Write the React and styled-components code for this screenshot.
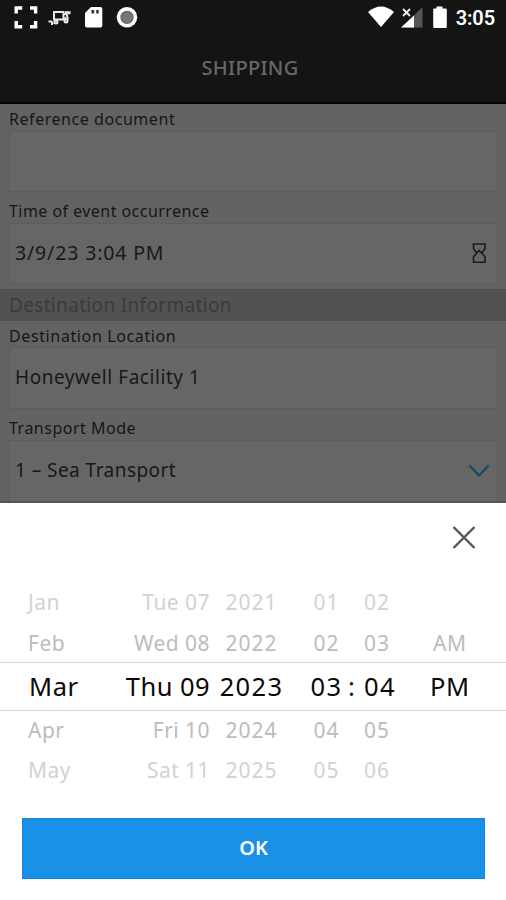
import styled, { createGlobalStyle } from 'styled-components';

const GlobalStyle = createGlobalStyle`
  * {
    box-sizing: border-box;
  }

  body {
    margin: 0;
    background-color: #fff;
    font-family: 'Noto Sans', sans-serif;
  }
`;

const Screen = styled.div`
  width: 506px;
  height: 900px;
  display: flex;
  flex-direction: column;
  overflow: hidden;
`;

const StatusBar = styled.div`
  height: 34px;
  flex-shrink: 0;
  display: flex;
  justify-content: space-between;
  padding: 0 11px 0 13px;
  background-color: #141414;
`;

const StatusTime = styled.span`
  font-family: Roboto, sans-serif;
  font-size: 20px;
  font-weight: 600;
  line-height: 36px;
  letter-spacing: -0.1px;
  color: #fff;
`;

const StatusGroup = styled.div`
  display: flex;
`;

const TitleBar = styled.header`
  height: 70px;
  flex-shrink: 0;
  padding-right: 6px;
  border-bottom: 2px solid #050505;
  background-color: #141414;
  color: #686868;
  font-size: 20px;
  font-weight: 500;
  line-height: 67px;
  letter-spacing: 0.3px;
  text-align: center;
`;

const Form = styled.main`
  height: 399px;
  flex-shrink: 0;
  overflow: hidden;
  background-color: #636363;
  border-bottom: 2px solid #555;
`;

const Label = styled.label`
  display: block;
  height: ${({ height }) => height};
  padding-left: 9px;
  font-size: 16px;
  line-height: ${({ line }) => line};
  letter-spacing: ${({ track }) => track || '0.5px'};
  color: #161616;
`;

const Field = styled.div`
  height: ${({ height }) => height || '61px'};
  margin: 0 8px 0 9px;
  padding: 0 7px 2px 5px;
  display: flex;
  align-items: center;
  justify-content: space-between;
  border: 1px solid #5d5d5d;
  background-color: #666;
  font-size: ${({ size }) => size || '19px'};
  letter-spacing: ${({ track }) => track || '0.3px'};
  color: #181818;
`;

const SectionTitle = styled.h2`
  height: 32px;
  margin: 5px 0 0;
  padding-left: 9px;
  background-color: #525252;
  font-size: 19px;
  font-weight: 400;
  line-height: 32px;
  letter-spacing: 0.33px;
  color: #3b3b3b;
`;

const Sheet = styled.section`
  flex: 1;
  display: flex;
  flex-direction: column;
  background-color: #fff;
`;

const SheetHeader = styled.div`
  height: 79px;
  padding: 21px 29px 0 0;
  display: flex;
  justify-content: flex-end;
  align-items: flex-start;
`;

const CloseButton = styled.button`
  width: 26px;
  height: 26px;
  padding: 0;
  border: 0;
  background: none;
`;

const tones = { far: '#d2d2d2', near: '#bcbcbc', current: '#0a0a0a' };

const PickerRow = styled.div`
  height: ${({ tone }) => (tone === 'current' ? '49px' : '40px')};
  display: grid;
  grid-template-columns: 95px 115px 83px 67px 52px 1fr;
  align-items: center;
  border: solid #d8d8d8;
  border-width: ${({ tone }) => (tone === 'current' ? '1px 0' : '0')};
  font-size: ${({ tone }) => (tone === 'current' ? '25.5px' : '21px')};
  letter-spacing: ${({ tone }) => (tone === 'current' ? '1.3px' : '1px')};
  line-height: ${({ line }) => line};
  white-space: pre;
  color: ${({ tone }) => tones[tone]};

  > span {
    height: 40px;
  }
`;

const Month = styled.span`
  padding-left: ${({ inset }) => inset};
  letter-spacing: 0.5px;
`;

const Day = styled.span`
  justify-self: end;
  letter-spacing: 0.45px;
`;

const Centered = styled.span`
  text-align: center;
`;

const Minute = styled.span`
  display: flex;
  padding-left: 4px;
`;

const Colon = styled.span`
  width: 16px;
  margin-left: -16px;
`;

const Period = styled.span`
  padding-left: ${({ inset }) => inset};
  letter-spacing: 0.6px;
`;

const OkButton = styled.button`
  height: 61px;
  margin: 27px 21px 0 22px;
  padding: 0;
  border: 1px solid #1287e0;
  background-color: #1991e7;
  color: #fff;
  font-family: inherit;
  font-size: 20px;
  font-weight: 600;
  line-height: 58px;

  > span {
    display: block;
    height: 59px;
  }
`;

const rows = [
  { month: 'Jan', day: 'Tue 07', year: '2021', hour: '01', minute: '02', period: '', tone: 'far', line: '40px' },
  { month: 'Feb', day: 'Wed 08', year: '2022', hour: '02', minute: '03', period: 'AM', tone: 'near', line: '42px' },
  { month: 'Mar', day: 'Thu 09', year: '2023', hour: '03', minute: '04', period: 'PM', tone: 'current', line: '38px' },
  { month: 'Apr', day: 'Fri 10', year: '2024', hour: '04', minute: '05', period: '', tone: 'near', line: '38px' },
  { month: 'May', day: 'Sat 11', year: '2025', hour: '05', minute: '06', period: '', tone: 'far', line: '38px' },
];

const NotificationIcons = () => (
  <svg width="130" height="34" viewBox="13 0 130 34">
    <path d="M16.200 13.500V8h6M30 8h5.600v5.500M35.600 21v5.800H30M22.200 26.800h-6V21" fill="none" stroke="#fff" strokeWidth="3.4" />
    <g fill="none" stroke="#ececec" strokeWidth="2">
      <path d="M54 12h9.500v7.500H54z" />
      <path d="M63.500 14h3l1.500 5.500M66 17.500l-2.500 2.500M65 12.300h5.500M68 14l2.500-1.500M48.500 21.500h3l1.500 2.500M51 24h2" />
      <circle cx="56" cy="22" r="1.500" />
      <circle cx="66" cy="21" r="1.500" />
    </g>
    <path d="M91 7h9.500q1.800 0 1.800 2v16.500q0 2-1.800 2H87q-2 0-2-2V13z" fill="#fff" />
    <path d="M91.500 10h2.700v3.500h-2.700zM96.200 10h2.500v3.500h-2.500z" fill="#333" />
    <circle cx="127" cy="17.300" r="10.300" fill="#fff" />
    <circle cx="127" cy="17.300" r="6" fill="#777" stroke="#666" strokeWidth="1.300" />
  </svg>
);

const SystemIcons = () => (
  <svg width="88" height="34" viewBox="368 0 88 34">
    <path d="M368 12q13-11 26 0L381 27z" fill="#fff" />
    <path d="M422.500 7v20.500h-21z" fill="#555" />
    <path d="M414 15.500v12h-13z" fill="#fff" />
    <path d="M402.500 9l7.500 7.500M410 9l-7.500 7.500" stroke="#141414" strokeWidth="4" />
    <path d="M403 9l7 7M410 9l-7 7" stroke="#eee" strokeWidth="1.900" />
    <path d="M436.500 6.500h6v2h3q1.300 0 1.300 1.300V27q0 1-1.300 1h-11q-1.300 0-1.300-1V9.800q0-1.300 1.300-1.300h2z" fill="#fff" />
  </svg>
);

const HourglassIcon = () => (
  <svg width="22" height="22" viewBox="0 0 22 22" fill="none" stroke="#1c1c1c" strokeWidth="1.6">
    <path d="M5.500 2h11.500v4.700L13.800 11l3.200 4v5.300H5.500V15l3.200-4-3.200-4.300zM8 12l3.200-3.500L14.500 12" />
  </svg>
);

const ChevronIcon = () => (
  <svg width="22" height="14" viewBox="0 0 22 14" fill="none" stroke="#154769" strokeWidth="2">
    <path d="M1.500 2.500l9.500 10 9.500-10" />
  </svg>
);

const CloseIcon = () => (
  <svg width="26" height="26" viewBox="0 0 26 26" fill="none" stroke="#555" strokeWidth="2.4">
    <path d="M2.500 3l21 21M23.500 3l-21 21" />
  </svg>
);

const App = () => (
  <Screen>
    <GlobalStyle />
    <StatusBar>
      <NotificationIcons />
      <StatusGroup>
        <SystemIcons />
        <StatusTime>3:05</StatusTime>
      </StatusGroup>
    </StatusBar>
    <TitleBar>SHIPPING</TitleBar>
    <Form>
      <Label height="27px" line="31px" track="0.55px">Reference document</Label>
      <Field />
      <Label height="31px" line="39px" track="0.45px">Time of event occurrence</Label>
      <Field size="19.5px" track="0.85px">
        3/9/23 3:04 PM
        <HourglassIcon />
      </Field>
      <SectionTitle>Destination Information</SectionTitle>
      <Label height="26px" line="31px" track="0.62px">Destination Location</Label>
      <Field height="62px" track="0.55px">Honeywell Facility 1</Field>
      <Label height="31px" line="38px">Transport Mode</Label>
      <Field height="62px" track="0.45px">
        1 – Sea Transport
        <ChevronIcon />
      </Field>
    </Form>
    <Sheet>
      <SheetHeader>
        <CloseButton aria-label="Close">
          <CloseIcon />
        </CloseButton>
      </SheetHeader>
      {rows.map(({ month, day, year, hour, minute, period, tone, line }) => (
        <PickerRow key={month} tone={tone} line={line}>
          <Month inset={tone === 'current' ? '29px' : '28px'}>{month}</Month>
          <Day>{day}</Day>
          <Centered>{year}</Centered>
          <Centered>{hour}</Centered>
          <Minute>
            {tone === 'current' && <Colon>:</Colon>}
            {minute}
          </Minute>
          <Period inset={tone === 'current' ? '18px' : '21px'}>{period}</Period>
        </PickerRow>
      ))}
      <OkButton>
        <span>OK</span>
      </OkButton>
    </Sheet>
  </Screen>
);

export default App;
